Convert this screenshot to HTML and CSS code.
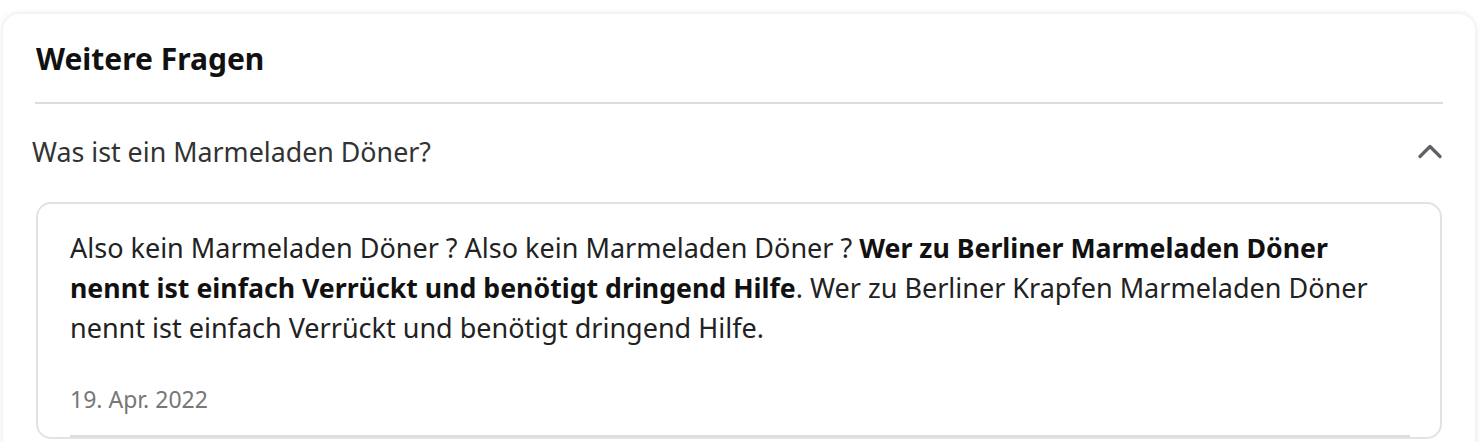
FILE: index.html
```html
<!DOCTYPE html>
<html lang="de">
<head>
<meta charset="utf-8">
<title>Weitere Fragen</title>
<link rel="stylesheet" href="styles.css">
</head>
<body>
<section class="card">
  <h2 class="card-title">Weitere Fragen</h2>
  <div class="faq-item">
    <div class="faq-question">
      <span class="faq-question-text">Was ist ein Marmeladen Döner?</span>
      <svg class="chevron" width="24" height="16" viewBox="0 0 24 16" aria-hidden="true">
        <path d="M2 13.5 L12 3.5 L22 13.5" fill="none" stroke="#5f6166" stroke-width="3.2" stroke-linecap="round" stroke-linejoin="round"/>
      </svg>
    </div>
    <div class="faq-answer">
      <p class="answer-text">Also kein Marmeladen Döner ? Also kein Marmeladen Döner ? <strong>Wer zu Berliner Marmeladen Döner nennt ist einfach Verrückt und benötigt dringend Hilfe</strong>. Wer zu Berliner Krapfen Marmeladen Döner nennt ist einfach Verrückt und benötigt dringend Hilfe.</p>
      <div class="answer-date">19. Apr. 2022</div>
      <div class="answer-rule"></div>
    </div>
  </div>
</section>
</body>
</html>
```

FILE: styles.css
```css
* { box-sizing: border-box; }

html, body {
  margin: 0;
  padding: 0;
  background: #ffffff;
}

body {
  font-family: "Noto Sans", "Open Sans", "Liberation Sans", sans-serif;
  color: #1f1f1f;
  height: 442px;
  overflow: hidden;
}

.card {
  margin: 14px 0 0 3px;
  width: 1472px;
  height: 600px;
  background: #fff;
  border-radius: 16px;
  box-shadow: 0 0 6px rgba(0, 0, 0, 0.12);
  padding: 0 32px;
}

.card-title {
  margin: 0;
  height: 90px;
  display: flex;
  align-items: center;
  padding-left: 1px;
  font-size: 30px;
  font-weight: 700;
  color: #111;
  border-bottom: 2px solid #dcdcdc;
}

.faq-question {
  height: 98px;
  display: flex;
  align-items: center;
  justify-content: space-between;
  margin-left: -3px;
  padding-bottom: 4px;
}

.faq-question-text {
  font-size: 26.8px;
  color: #333;
}

.chevron {
  margin-right: 1px;
  display: block;
}

.faq-answer {
  margin-left: 1px;
  margin-right: 1px;
  border: 2px solid #e2e2e2;
  border-radius: 15px;
  padding: 24px 30px 0 32px;
}

.answer-text {
  margin: 0;
  padding-right: 14px;
  font-size: 27px;
  line-height: 40px;
  color: #222;
}

.answer-text strong {
  font-weight: 700;
  font-size: 26.7px;
  color: #111;
}

.answer-date {
  margin-top: 36px;
  font-size: 23px;
  line-height: 30px;
  color: #777;
}

.answer-rule {
  margin-top: 21px;
  height: 2px;
  background: #dedede;
}
```
